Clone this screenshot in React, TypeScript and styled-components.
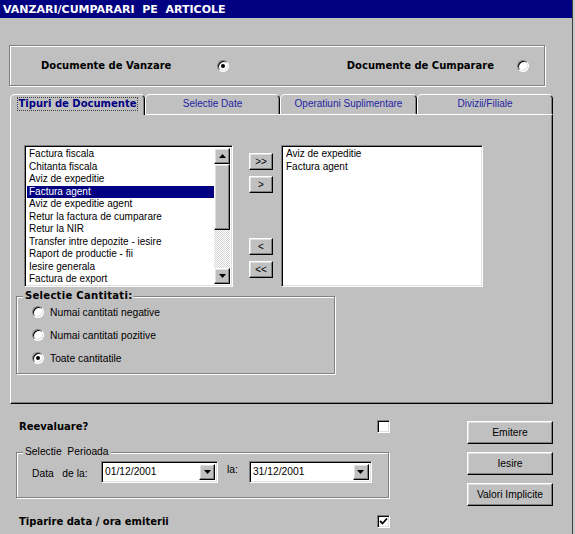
import React from 'react';
import styled, { createGlobalStyle, css } from 'styled-components';

const Global = createGlobalStyle`
  html, body { margin: 0; padding: 0; background: #c8c8c8; }
  body { font-family: "Liberation Sans", Arial, sans-serif; font-size: 10px; color: #000; }
  * { box-sizing: border-box; }
`;

const raised = css`
  border: 1px solid;
  border-color: #fff #000 #000 #fff;
  box-shadow: inset -1px -1px 0 #808080, inset 1px 1px 0 #dfdfdf;
  background: #c0c0c0;
`;

const sunken = css`
  border: 1px solid;
  border-color: #808080 #fff #fff #808080;
  box-shadow: inset 1px 1px 0 #000, inset -1px -1px 0 #dfdfdf;
`;

const etched = css`
  border: 1px solid #808080;
  box-shadow: 1px 1px 0 #fff, inset 1px 1px 0 #fff;
`;

const boldFont = css`
  font-family: "DejaVu Sans", Verdana, sans-serif;
  font-weight: bold;
  font-size: 10px;
`;

const Page = styled.div`
  width: 575px;
  height: 534px;
  overflow: hidden;
  background: #c8c8c8;
`;

const Window = styled.div`
  width: 573px;
  height: 534px;
  background: #c0c0c0;
  border-right: 1px solid #404040;
  display: flex;
  flex-direction: column;
`;

const TitleBar = styled.div`
  height: 18px;
  background: #000080;
  color: #fff;
  font-family: "DejaVu Sans", Verdana, sans-serif;
  font-weight: bold;
  font-size: 11px;
  padding-left: 3px;
  display: flex;
  align-items: center;
  white-space: pre;
`;

const TopGroup = styled.div`
  ${etched};
  margin: 27px 0 0 9px;
  width: 536px;
  height: 41px;
  display: flex;
  align-items: center;
  justify-content: space-between;
  padding: 0 15px 0 31px;
`;

const Option = styled.div<{ $gap?: number }>`
  display: flex;
  align-items: center;
  gap: ${(p) => p.$gap ?? 0}px;
`;

const BoldLabel = styled.span<{ $width?: number }>`
  ${boldFont};
  white-space: pre;
  ${(p) => (p.$width ? `width: ${p.$width}px;` : '')}
`;

const RadioDot = styled.span<{ $checked?: boolean }>`
  flex: none;
  width: 12px;
  height: 12px;
  border-radius: 50%;
  background: #fff;
  border: 1px solid;
  border-color: #808080 #fff #fff #808080;
  box-shadow: inset 1px 1px 0 #000, inset -1px -1px 0 #dfdfdf;
  display: flex;
  align-items: center;
  justify-content: center;
  &::after {
    content: '';
    width: 4px;
    height: 4px;
    border-radius: 50%;
    background: ${(p) => (p.$checked ? '#000' : 'transparent')};
  }
`;

const TabArea = styled.div`
  margin: 8px 0 0 10px;
  width: 543px;
  display: flex;
  flex-direction: column;
`;

const TabStrip = styled.div`
  display: grid;
  grid-template-columns: 135px 135px 137px 136px;
  height: 20px;
  align-items: end;
`;

const Tab = styled.div<{ $active?: boolean }>`
  height: ${(p) => (p.$active ? 21 : 20)}px;
  margin-bottom: ${(p) => (p.$active ? -1 : 0)}px;
  position: relative;
  z-index: ${(p) => (p.$active ? 2 : 0)};
  background: #c0c0c0;
  border: 1px solid;
  border-bottom: none;
  border-color: #fff #000 transparent #fff;
  border-radius: 5px 5px 0 0;
  box-shadow: inset -1px 0 0 #808080;
  display: flex;
  align-items: flex-start;
  justify-content: center;
  padding-top: 3px;
  color: ${(p) => (p.$active ? '#000080' : '#2323a0')};
  ${(p) => (p.$active ? boldFont : '')};
  white-space: nowrap;
`;

const FocusText = styled.span`
  outline: 1px dotted #404040;
  outline-offset: 0px;
  padding: 0 1px;
  line-height: 12px;
`;

const Panel = styled.div`
  height: 290px;
  border: 1px solid;
  border-color: #fff #000 #000 #fff;
  box-shadow: inset -1px -1px 0 #808080;
  padding: 30px 0 0 5px;
  display: flex;
  flex-direction: column;
`;

const ListRow = styled.div`
  display: flex;
  align-items: flex-start;
  margin-left: 8px;
`;

const ListBox = styled.div<{ $w: number }>`
  ${sunken};
  width: ${(p) => p.$w}px;
  height: 142px;
  background: #fff;
  padding: 2px;
  display: flex;
`;

const Items = styled.div`
  flex: 1;
  display: flex;
  flex-direction: column;
  overflow: hidden;
`;

const Item = styled.div<{ $selected?: boolean }>`
  flex: none;
  height: 12.5px;
  line-height: 12.5px;
  padding-left: 2px;
  white-space: nowrap;
  background: ${(p) => (p.$selected ? '#000080' : 'transparent')};
  color: ${(p) => (p.$selected ? '#fff' : '#000')};
`;

const ScrollBar = styled.div`
  width: 16px;
  display: flex;
  flex-direction: column;
`;

const ScrollBtn = styled.div`
  ${raised};
  width: 16px;
  height: 16px;
  display: flex;
  align-items: center;
  justify-content: center;
`;

const Thumb = styled.div`
  ${raised};
  height: 66px;
`;

const Track = styled.div`
  flex: 1;
  background: repeating-conic-gradient(#ffffff 0 25%, #d4d4d4 0 50%) 0 0 / 2px 2px;
`;

const MoveCol = styled.div`
  display: flex;
  flex-direction: column;
  margin: 8px 8px 0 16px;
  width: 24px;
`;

const MoveBtn = styled.div<{ $top: number }>`
  ${raised};
  height: 17px;
  margin-top: ${(p) => p.$top}px;
  display: flex;
  align-items: center;
  justify-content: center;
  font-size: 10px;
  line-height: 10px;
`;

const GroupBox = styled.fieldset<{ $w: number }>`
  ${etched};
  width: ${(p) => p.$w}px;
  margin: 0;
  min-width: 0;
  padding-left: 0;
  padding-right: 0;
`;

const CantGroup = styled(GroupBox)`
  margin-top: 3px;
  padding-top: 3px;
  padding-bottom: 8px;
`;

const Legend = styled.legend<{ $bold?: boolean }>`
  margin-left: 6px;
  padding: 0 2px;
  line-height: 12px;
  background: #c0c0c0;
  white-space: pre;
  ${(p) => (p.$bold ? boldFont : '')};
  ${(p) => (p.$bold ? 'letter-spacing: 0.3px;' : 'font-size: 10.3px;')};
`;

const RadioList = styled.div`
  display: flex;
  flex-direction: column;
  gap: 9px;
  padding-left: 15px;
`;

const RadioRow = styled.label`
  display: flex;
  align-items: center;
  gap: 6px;
  height: 14px;
  font-size: 10.3px;
`;

const Bottom = styled.div`
  display: flex;
  margin-left: 16px;
`;

const LeftCol = styled.div`
  width: 374px;
  display: flex;
  flex-direction: column;
`;

const CheckRow = styled.div<{ $top: number }>`
  display: flex;
  align-items: center;
  justify-content: space-between;
  height: 13px;
  margin-top: ${(p) => p.$top}px;
  padding-left: 3px;
`;

const CheckBox = styled.span`
  ${sunken};
  width: 13px;
  height: 13px;
  background: #fff;
  display: flex;
  align-items: center;
  justify-content: center;
`;

const PeriodGroup = styled(GroupBox)`
  margin-top: 13px;
  padding-top: 3px;
  padding-bottom: 14px;
`;

const DateRow = styled.div`
  display: flex;
  align-items: center;
  height: 22px;
  padding-left: 15px;
`;

const FieldLabel = styled.span<{ $w?: number; $raise?: boolean }>`
  white-space: pre;
  ${(p) => (p.$w ? `width: ${p.$w}px;` : '')}
  ${(p) => (p.$raise ? 'align-self: flex-start; margin: 3px 11px 0 9px;' : 'margin-top: 3px;')}
  font-size: 10.3px;
`;

const Combo = styled.div<{ $w: number }>`
  ${sunken};
  width: ${(p) => p.$w}px;
  height: 22px;
  background: #fff;
  padding: 2px;
  display: flex;
  align-items: stretch;
`;

const ComboText = styled.span`
  flex: 1;
  padding: 2px 0 0 1px;
  font-size: 10.3px;
`;

const DropBtn = styled.div`
  ${raised};
  width: 16px;
  display: flex;
  align-items: center;
  justify-content: center;
`;

const RightCol = styled.div`
  margin: 17px 0 0 77px;
  width: 86px;
  display: flex;
  flex-direction: column;
  gap: 8px;
`;

const Button = styled.button`
  ${raised};
  height: 23px;
  width: 86px;
  padding: 0;
  font-family: "Liberation Sans", Arial, sans-serif;
  font-size: 10.3px;
  color: #000;
`;

const Arrow = ({ up }: { up?: boolean }) => (
  <svg width="7" height="4" viewBox="0 0 7 4">
    <path d={up ? 'M0 4 L3.5 0 L7 4 Z' : 'M0 0 L7 0 L3.5 4 Z'} fill="#000" />
  </svg>
);

const Check = () => (
  <svg width="9" height="9" viewBox="0 0 9 9">
    <path d="M1 4 L3.5 6.5 L8 1.5" fill="none" stroke="#000" strokeWidth="1.8" />
  </svg>
);

const leftItems = [
  'Factura fiscala',
  'Chitanta fiscala',
  'Aviz de expeditie',
  'Factura agent',
  'Aviz de expeditie agent',
  'Retur la factura de cumparare',
  'Retur la NIR',
  'Transfer intre depozite - iesire',
  'Raport de productie - fii',
  'Iesire generala',
  'Factura de export',
];

const rightItems = ['Aviz de expeditie', 'Factura agent'];

export default function App() {
  return (
    <Page>
      <Global />
      <Window>
        <TitleBar>VANZARI/CUMPARARI  PE  ARTICOLE</TitleBar>
        <TopGroup>
          <Option>
            <BoldLabel $width={176}>Documente de Vanzare</BoldLabel>
            <RadioDot $checked />
          </Option>
          <Option $gap={23}>
            <BoldLabel>Documente de Cumparare</BoldLabel>
            <RadioDot />
          </Option>
        </TopGroup>
        <TabArea>
          <TabStrip>
            <Tab $active>
              <FocusText>Tipuri de Documente</FocusText>
            </Tab>
            <Tab>Selectie Date</Tab>
            <Tab>Operatiuni Suplimentare</Tab>
            <Tab>Divizii/Filiale</Tab>
          </TabStrip>
          <Panel>
            <ListRow>
              <ListBox $w={209}>
                <Items>
                  {leftItems.map((t, i) => (
                    <Item key={t} $selected={i === 3}>
                      {t}
                    </Item>
                  ))}
                </Items>
                <ScrollBar>
                  <ScrollBtn>
                    <Arrow up />
                  </ScrollBtn>
                  <Thumb />
                  <Track />
                  <ScrollBtn>
                    <Arrow />
                  </ScrollBtn>
                </ScrollBar>
              </ListBox>
              <MoveCol>
                <MoveBtn $top={0}>&gt;&gt;</MoveBtn>
                <MoveBtn $top={6}>&gt;</MoveBtn>
                <MoveBtn $top={45}>&lt;</MoveBtn>
                <MoveBtn $top={6}>&lt;&lt;</MoveBtn>
              </MoveCol>
              <ListBox $w={202}>
                <Items>
                  {rightItems.map((t) => (
                    <Item key={t}>{t}</Item>
                  ))}
                </Items>
              </ListBox>
            </ListRow>
            <CantGroup $w={319}>
              <Legend $bold>Selectie Cantitati:</Legend>
              <RadioList>
                <RadioRow>
                  <RadioDot />
                  Numai cantitati negative
                </RadioRow>
                <RadioRow>
                  <RadioDot />
                  Numai cantitati pozitive
                </RadioRow>
                <RadioRow>
                  <RadioDot $checked />
                  Toate cantitatile
                </RadioRow>
              </RadioList>
            </CantGroup>
          </Panel>
        </TabArea>
        <Bottom>
          <LeftCol>
            <CheckRow $top={16}>
              <BoldLabel>Reevaluare?</BoldLabel>
              <CheckBox />
            </CheckRow>
            <PeriodGroup $w={373}>
              <Legend>Selectie  Perioada</Legend>
              <DateRow>
                <FieldLabel $w={69}>Data   de la:</FieldLabel>
                <Combo $w={117}>
                  <ComboText>01/12/2001</ComboText>
                  <DropBtn>
                    <Arrow />
                  </DropBtn>
                </Combo>
                <FieldLabel $raise>la:</FieldLabel>
                <Combo $w={123}>
                  <ComboText>31/12/2001</ComboText>
                  <DropBtn>
                    <Arrow />
                  </DropBtn>
                </Combo>
              </DateRow>
            </PeriodGroup>
            <CheckRow $top={17}>
              <BoldLabel>Tiparire data / ora emiterii</BoldLabel>
              <CheckBox>
                <Check />
              </CheckBox>
            </CheckRow>
          </LeftCol>
          <RightCol>
            <Button>Emitere</Button>
            <Button>Iesire</Button>
            <Button>Valori Implicite</Button>
          </RightCol>
        </Bottom>
      </Window>
    </Page>
  );
}
